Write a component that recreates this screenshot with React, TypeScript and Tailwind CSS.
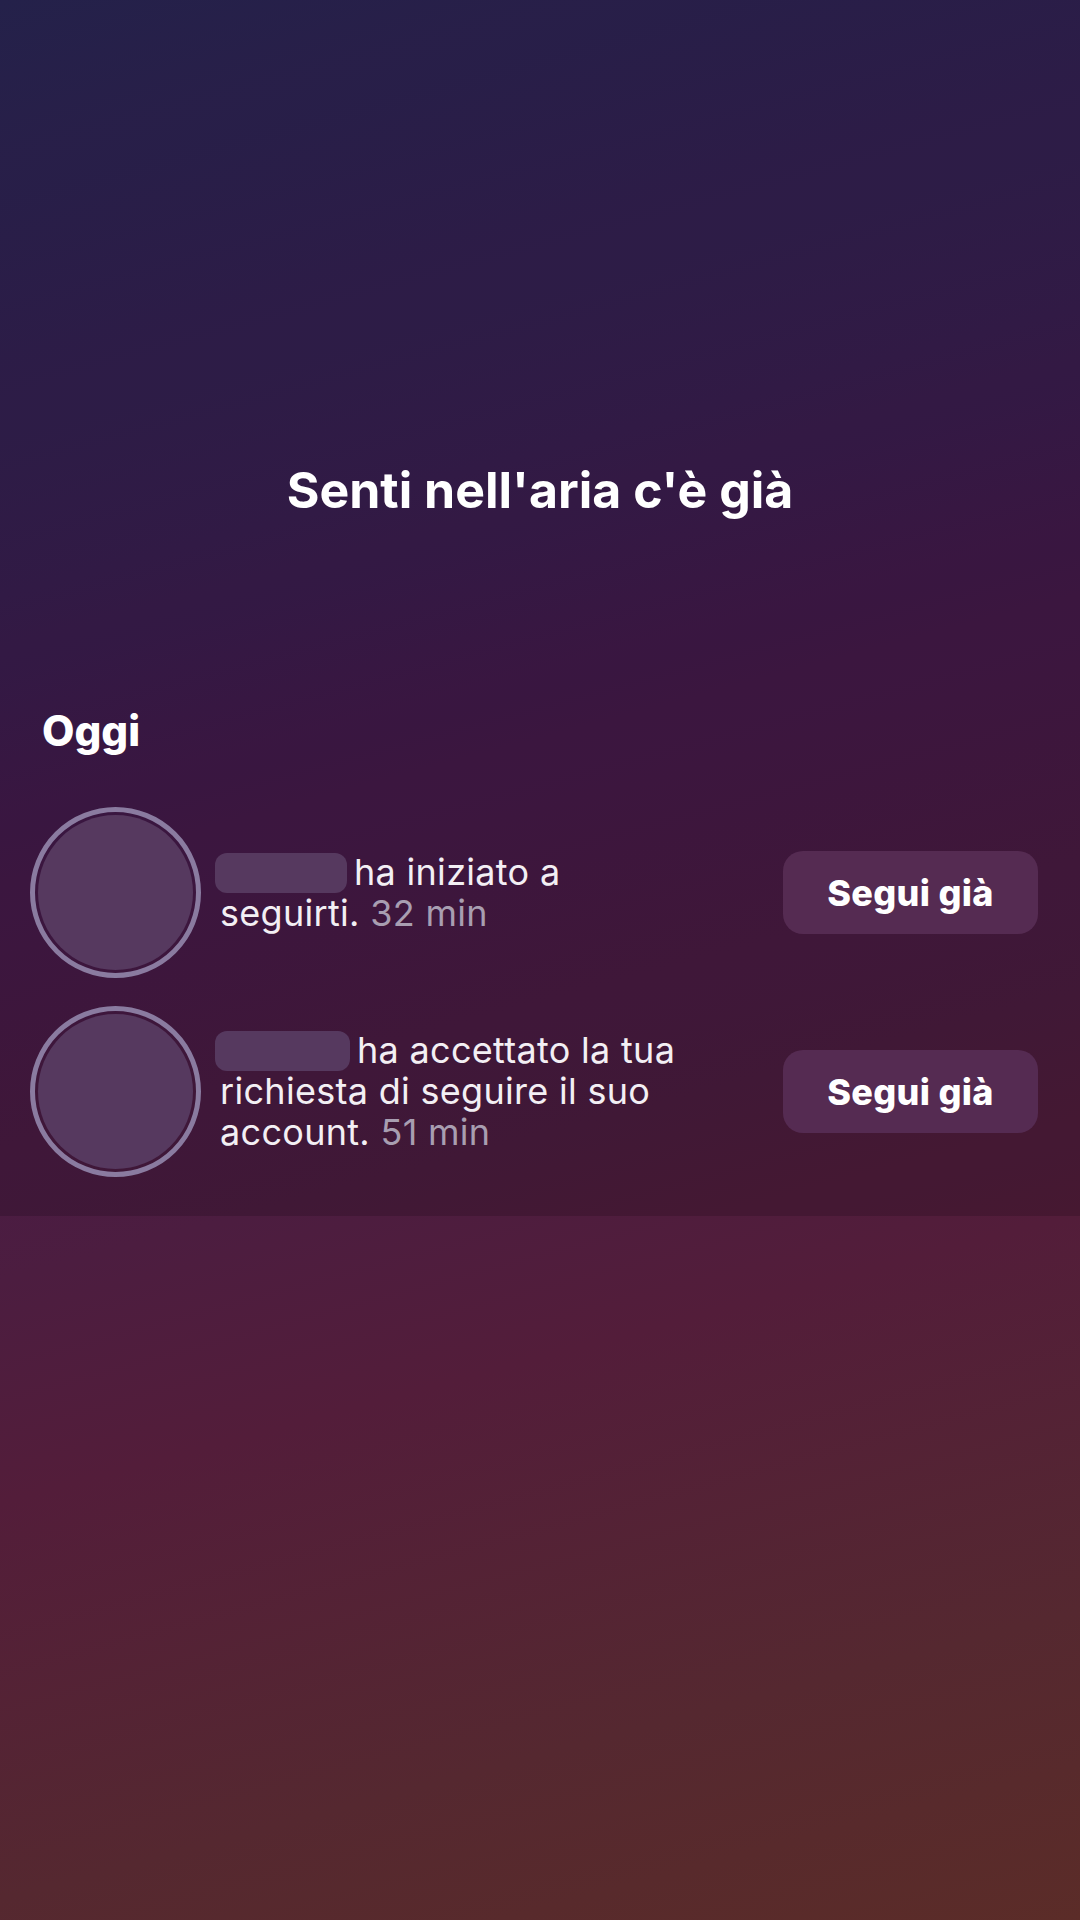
import React from 'react';

interface Notification {
  id: string;
  blobWidth: number;
  lines: React.ReactNode;
}

function Avatar() {
  return (
    <div className="shrink-0 w-[171px] h-[171px] rounded-full border-[5px] border-[#8a7ba0] p-[3px]">
      <div className="w-full h-full rounded-full bg-[#56395f]" />
    </div>
  );
}

function HiddenName({ width }: { width: number }) {
  // nome oscurato nello screenshot
  return (
    <span
      className="inline-block h-[40px] rounded-[12px] bg-[#56395f] align-[-8px] mr-[7px] ml-[-5px]"
      style={{ width }}
    />
  );
}

export default function App() {
  const items: Notification[] = [
    {
      id: 'n1',
      blobWidth: 132,
      lines: (
        <>
          ha iniziato a
          <br />
          seguirti. <span className="text-[#a89eb1]">32 min</span>
        </>
      ),
    },
    {
      id: 'n2',
      blobWidth: 135,
      lines: (
        <>
          ha accettato la tua
          <br />
          richiesta di seguire il suo
          <br />
          account. <span className="text-[#a89eb1]">51 min</span>
        </>
      ),
    },
  ];

  return (
    <div className="w-[1080px] min-h-[1920px] bg-[linear-gradient(165deg,#2b2757_0%,#3a1f52_27%,#461a4b_40%,#4c1d40_58%,#531d3a_68%,#552830_86%,#5b2c28_100%)] font-[Inter,sans-serif]">
      <div className="h-[1216px] bg-black/15 flex flex-col">
        <h1 className="pt-[461px] text-center text-[50px] leading-[58px] font-bold text-white">
          Senti nell'aria c'è già
        </h1>

        <h2 className="mt-[187px] pl-[42px] text-[42px] leading-[49px] font-extrabold text-white">
          Oggi
        </h2>

        <div className="mt-[52px] flex flex-col gap-[28px] pl-[30px] pr-[42px]">
          {items.map((n) => (
            <div key={n.id} className="flex items-center">
              <Avatar />
              <p className="flex-1 ml-[19px] text-[36px] leading-[41px] tracking-[0.3px] text-[#f3eff4]">
                <HiddenName width={n.blobWidth} />
                {n.lines}
              </p>
              <button className="shrink-0 w-[255px] h-[83px] rounded-[20px] bg-[#552b52] text-[36px] font-extrabold tracking-[0.3px] text-white">
                Segui già
              </button>
            </div>
          ))}
        </div>
      </div>
    </div>
  );
}
